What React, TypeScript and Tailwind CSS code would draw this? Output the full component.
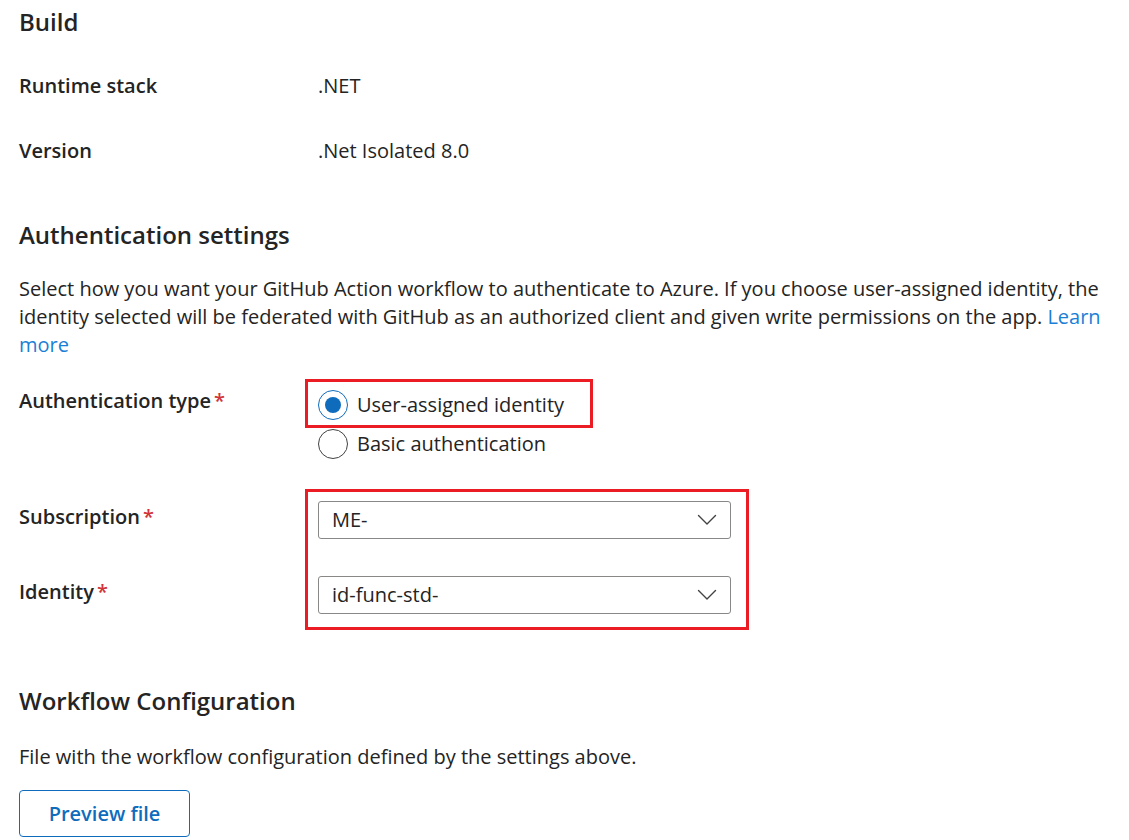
import { useState } from "react";

const Asterisk = () => <span className="ml-[3px] text-[#d13438]">*</span>;

const Chevron = () => (
  <svg width="20" height="12" viewBox="0 0 20 12" fill="none">
    <path d="M1.5 1.5 L10 10 L18.5 1.5" stroke="#424242" strokeWidth="1.4" strokeLinecap="round" strokeLinejoin="round" />
  </svg>
);

const Radio = ({ checked, label, onClick }: { checked: boolean; label: string; onClick: () => void }) => (
  <button type="button" onClick={onClick} className="flex items-center h-[30px] text-left">
    <span
      className={
        checked
          ? "flex items-center justify-center w-[30px] h-[30px] rounded-full border-[1.5px] border-[#0f6cbd]"
          : "flex items-center justify-center w-[30px] h-[30px] rounded-full border-[1.5px] border-[#424242]"
      }
    >
      {checked && <span className="w-[16px] h-[16px] rounded-full bg-[#0f6cbd]" />}
    </span>
    <span className="ml-[9px] text-[20px] leading-[28px]">{label}</span>
  </button>
);

const Dropdown = ({ value }: { value: string }) => (
  <div className="flex items-center justify-between w-[413px] h-[38px] pl-[13px] pr-[13px] border border-[#8a8886] rounded-[3px] bg-white">
    <span className="text-[20px] leading-[28px]">{value}</span>
    <Chevron />
  </div>
);

export default function App() {
  const [auth, setAuth] = useState("user");

  return (
    <div
      className="min-h-screen bg-white text-[#242424] pl-[19px] pr-[20px] pt-[6px]"
      style={{ fontFamily: '"Open Sans", "Noto Sans", sans-serif' }}
    >
      <h2 className="text-[24px] leading-[32px] font-semibold">Build</h2>

      <div className="flex mt-[34px] text-[20px] leading-[28px]">
        <div className="w-[299px] font-semibold">Runtime stack</div>
        <div>.NET</div>
      </div>
      <div className="flex mt-[37px] text-[20px] leading-[28px]">
        <div className="w-[299px] font-semibold">Version</div>
        <div>.Net Isolated 8.0</div>
      </div>

      <h2 className="mt-[54px] text-[24px] leading-[32px] font-semibold">Authentication settings</h2>
      <p className="mt-[24px] text-[20px] leading-[28px] max-w-[1100px]">
        Select how you want your GitHub Action workflow to authenticate to Azure. If you choose user-assigned identity, the
        identity selected will be federated with GitHub as an authorized client and given write permissions on the app.{" "}
        <a href="#" className="text-[#1a7fd6]">
          Learn
        </a>{" "}
        <a href="#" className="text-[#1a7fd6]">
          more
        </a>
      </p>

      <div className="flex mt-[28px]">
        <div className="w-[299px] text-[20px] leading-[28px] font-semibold">
          Authentication type
          <Asterisk />
        </div>
        <div className="flex flex-col gap-[9px] pt-[3px]">
          <div className="relative">
            <Radio checked={auth === "user"} label="User-assigned identity" onClick={() => setAuth("user")} />
            <div className="absolute -left-[13px] -top-[11px] w-[288px] h-[49px] border-[3px] border-[#ec1c24] pointer-events-none" />
          </div>
          <Radio checked={auth === "basic"} label="Basic authentication" onClick={() => setAuth("basic")} />
        </div>
      </div>

      <div className="relative mt-[42px]">
        <div className="flex items-start">
          <div className="w-[299px] mt-[2px] text-[20px] leading-[28px] font-semibold">
            Subscription
            <Asterisk />
          </div>
          <Dropdown value="ME-" />
        </div>
        <div className="flex items-start mt-[37px]">
          <div className="w-[299px] mt-[2px] text-[20px] leading-[28px] font-semibold">
            Identity
            <Asterisk />
          </div>
          <Dropdown value="id-func-std-" />
        </div>
        <div className="absolute left-[286px] -top-[12px] w-[444px] h-[141px] border-[3px] border-[#ec1c24] pointer-events-none" />
      </div>

      <h2 className="mt-[71px] text-[24px] leading-[32px] font-semibold">Workflow Configuration</h2>
      <p className="mt-[26px] text-[20px] leading-[28px]">File with the workflow configuration defined by the settings above.</p>
      <button
        type="button"
        className="mt-[19px] w-[171px] h-[47px] border border-[#0f6cbd] rounded-[4px] text-[#0f6cbd] text-[20px] font-semibold"
      >
        Preview file
      </button>
    </div>
  );
}
